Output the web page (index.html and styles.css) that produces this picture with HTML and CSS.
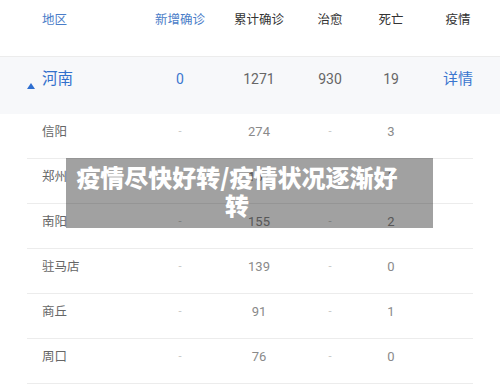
FILE: index.html
```html
<!DOCTYPE html>
<html lang="zh-CN">
<head>
<meta charset="utf-8">
<link rel="stylesheet" href="styles.css">
</head>
<body>
<div class="page">
  <div class="row head">
    <div class="c1 blue">地区</div>
    <div class="blue">新增确诊</div>
    <div>累计确诊</div>
    <div>治愈</div>
    <div>死亡</div>
    <div>疫情</div>
  </div>
  <div class="row prov">
    <div class="c1"><span class="tri"></span><span class="pname">河南</span></div>
    <div class="blue">0</div>
    <div>1271</div>
    <div>930</div>
    <div>19</div>
    <div class="blue detail">详情</div>
  </div>
  <div class="row city"><div class="c1">信阳</div><div class="dash">-</div><div>274</div><div class="dash">-</div><div>3</div></div>
  <div class="row city"><div class="c1">郑州</div><div class="dash">-</div><div>157</div><div class="dash">-</div><div>5</div></div>
  <div class="row city"><div class="c1">南阳</div><div class="dash">-</div><div>155</div><div class="dash">-</div><div>2</div></div>
  <div class="row city"><div class="c1">驻马店</div><div class="dash">-</div><div>139</div><div class="dash">-</div><div>0</div></div>
  <div class="row city"><div class="c1">商丘</div><div class="dash">-</div><div>91</div><div class="dash">-</div><div>1</div></div>
  <div class="row city"><div class="c1">周口</div><div class="dash">-</div><div>76</div><div class="dash">-</div><div>0</div></div>
  <div class="banner">疫情尽快好转/疫情状况逐渐好转</div>
</div>
</body>
</html>
```
FILE: styles.css
```css
html, body {
  margin: 0;
  padding: 0;
  background: #ffffff;
}
.page {
  position: relative;
  width: 500px;
  height: 387px;
  overflow: hidden;
  font-family: "Roboto", "Noto Sans CJK SC", sans-serif;
}
.row {
  display: grid;
  grid-template-columns: 113px 80px 78px 64px 58px 76px;
  text-align: center;
}
.row .c1 {
  text-align: left;
  padding-left: 15px;
}
.blue { color: #3b77cf; }
.head {
  height: 57px;
  padding-left: 27px;
  padding-top: 12px;
  box-sizing: border-box;
  font-size: 12.5px;
  line-height: 16px;
  color: #333;
  border-bottom: 1px solid #ececec;
}
.head .blue { color: #4a7dc8; }
.prov {
  height: 57px;
  box-sizing: border-box;
  padding-left: 27px;
  padding-top: 12px;
  background: #f7f8fa;
  align-items: start;
  font-size: 14px;
  line-height: 20px;
  color: #666;
}
.prov .c1 {
  padding-left: 0;
  display: flex;
  align-items: flex-start;
  gap: 7px;
}
.tri {
  width: 0;
  height: 0;
  border-left: 4px solid transparent;
  border-right: 4px solid transparent;
  border-bottom: 6px solid #2f6fd0;
  margin-top: 14px;
}
.pname {
  font-size: 15.5px;
  color: #3270cc;
}
.detail { font-size: 15px; color: #3a76cf; }
.city {
  margin: 0 27px;
  grid-template-columns: 113px 80px 78px 64px 58px 1fr;
  height: 45px;
  box-sizing: border-box;
  padding-top: 9px;
  line-height: 17px;
  border-bottom: 1px solid #ececec;
  font-size: 13px;
  color: #8a8a8a;
}
.city .c1 {
  font-size: 12.5px;
  color: #666;
}
.city .dash { color: #c4c4c4; font-size: 11px; }
.banner {
  position: absolute;
  left: 66px;
  top: 158px;
  width: 367px;
  height: 70px;
  box-sizing: border-box;
  padding: 5px 35px 0 10px;
  background: rgba(0, 0, 0, 0.37);
  color: #ffffff;
  font-family: "Noto Sans CJK SC", sans-serif;
  font-weight: 900;
  font-size: 24px;
  line-height: 28px;
  text-align: center;
}
```
